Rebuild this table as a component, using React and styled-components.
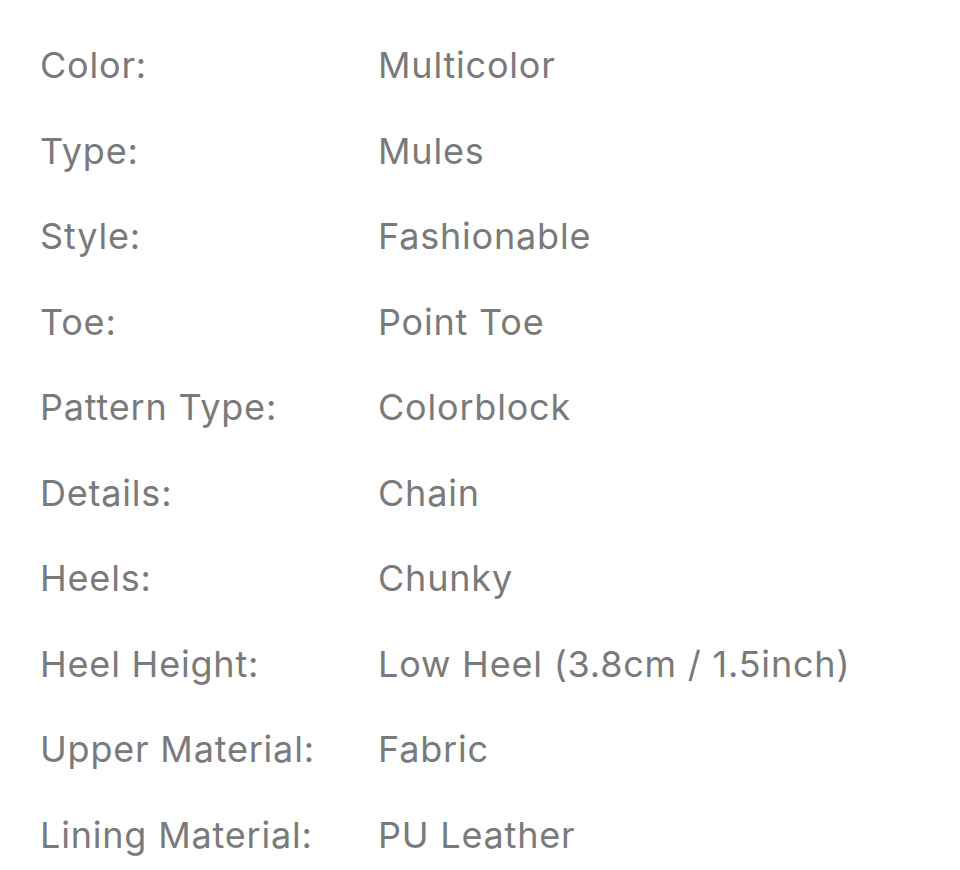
import React from 'react';
import styled, { createGlobalStyle } from 'styled-components';

const GlobalStyle = createGlobalStyle`
  body {
    margin: 0;
    background: #ffffff;
    font-family: Inter, "Liberation Sans", sans-serif;
  }
`;

const SpecList = styled.dl`
  margin: 0;
  padding: 41px 0 0 40px;
  display: grid;
  grid-template-columns: 338px 1fr;
  grid-auto-rows: 85.5px;
  align-items: start;
  color: #7a7a7a;
  font-size: 36px;
  line-height: 48px;
  letter-spacing: 0.8px;
`;

const Label = styled.dt`
  margin: 0;
`;

const Value = styled.dd`
  margin: 0;
`;

const specs = [
  ['Color:', 'Multicolor'],
  ['Type:', 'Mules'],
  ['Style:', 'Fashionable'],
  ['Toe:', 'Point Toe'],
  ['Pattern Type:', 'Colorblock'],
  ['Details:', 'Chain'],
  ['Heels:', 'Chunky'],
  ['Heel Height:', 'Low Heel (3.8cm / 1.5inch)'],
  ['Upper Material:', 'Fabric'],
  ['Lining Material:', 'PU Leather'],
];

const App = () => (
  <>
    <GlobalStyle />
    <SpecList>
      {specs.map(([label, value]) => (
        <React.Fragment key={label}>
          <Label>{label}</Label>
          <Value>{value}</Value>
        </React.Fragment>
      ))}
    </SpecList>
  </>
);

export default App;
